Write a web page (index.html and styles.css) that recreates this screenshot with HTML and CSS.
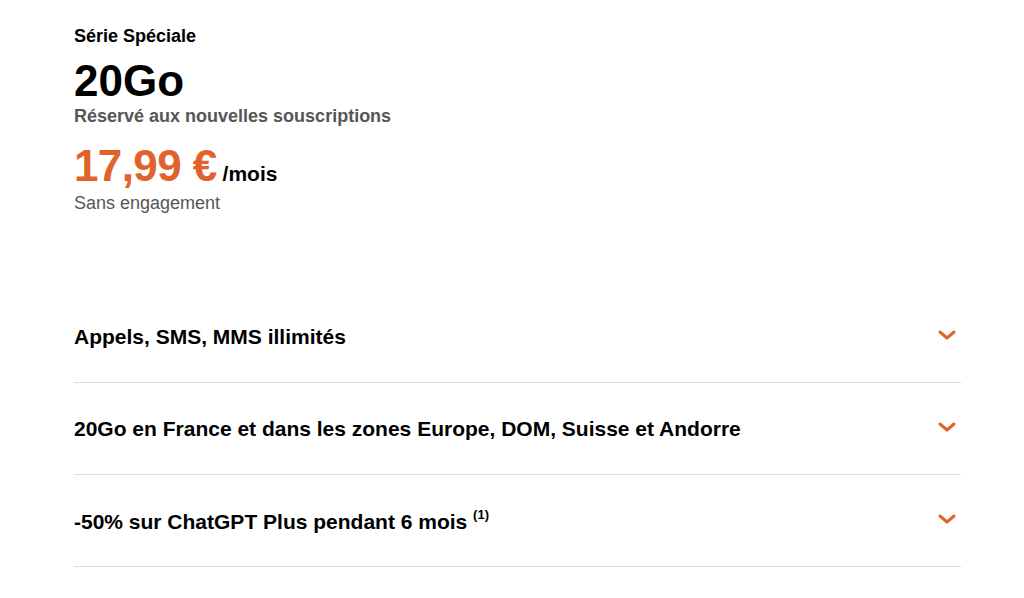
FILE: index.html
```html
<!DOCTYPE html>
<html lang="fr">
<head>
    <meta charset="UTF-8">
    <meta name="viewport" content="width=device-width, initial-scale=1.0">
    <title>Série Spéciale 20Go</title>
    <link rel="stylesheet" href="styles.css">
</head>
<body>
    <div class="offer">
        <!-- Offer header -->
        <div class="offer-head">
            <p class="offer-tag">Série Spéciale</p>
            <h1 class="offer-name">20Go</h1>
            <p class="offer-note">Réservé aux nouvelles souscriptions</p>
            <p class="offer-price"><span class="amount">17,99 €</span><span class="period">/mois</span></p>
            <p class="offer-terms">Sans engagement</p>
        </div>

        <!-- Features -->
        <ul class="features">
            <li class="feature">
                <span class="feature-title">Appels, SMS, MMS illimités</span>
                <svg class="chevron" viewBox="0 0 18 10" width="18" height="10"><path d="M2 2 L9 8 L16 2"/></svg>
            </li>
            <li class="feature">
                <span class="feature-title">20Go en France et dans les zones Europe, DOM, Suisse et Andorre</span>
                <svg class="chevron" viewBox="0 0 18 10" width="18" height="10"><path d="M2 2 L9 8 L16 2"/></svg>
            </li>
            <li class="feature">
                <span class="feature-title">-50% sur ChatGPT Plus pendant 6 mois <sup>(1)</sup></span>
                <svg class="chevron" viewBox="0 0 18 10" width="18" height="10"><path d="M2 2 L9 8 L16 2"/></svg>
            </li>
        </ul>
    </div>
</body>
</html>
```

FILE: styles.css
```css
body {
    margin: 0;
    background-color: #fff;
    color: #000;
    font-family: "Liberation Sans", Arial, sans-serif;
}

.offer {
    width: 887px;
    padding: 26px 0 0 74px;
}

.offer-tag {
    margin: 0;
    font-size: 18px;
    font-weight: bold;
    line-height: 21px;
}

.offer-name {
    margin: 9px 0 0;
    font-size: 44px;
    font-weight: bold;
    line-height: 50px;
}

.offer-note {
    margin: 0;
    font-size: 18px;
    font-weight: bold;
    color: #565656;
    line-height: 21px;
}

.offer-price {
    display: flex;
    align-items: baseline;
    margin: 14px 0 0;
}

.amount {
    font-size: 44px;
    font-weight: bold;
    line-height: 50px;
    color: #e1622a;
    letter-spacing: -0.6px;
}

.period {
    font-size: 21px;
    font-weight: bold;
    line-height: 24px;
    margin-left: 6px;
}

.offer-terms {
    margin: 2px 0 0;
    font-size: 18px;
    color: #565656;
    line-height: 21px;
}

.features {
    list-style: none;
    margin: 77px 0 0;
    padding: 0;
}

.feature {
    display: flex;
    align-items: center;
    justify-content: space-between;
    height: 91px;
    border-bottom: 1px solid #dddddd;
}

.feature-title {
    font-size: 21px;
    font-weight: bold;
}

.feature-title sup {
    font-size: 13px;
    vertical-align: 10px;
}

.chevron {
    margin: 0 5px 3px 0;
}

.chevron path {
    fill: none;
    stroke: #e1622a;
    stroke-width: 3;
    stroke-linecap: round;
    stroke-linejoin: round;
}
```
